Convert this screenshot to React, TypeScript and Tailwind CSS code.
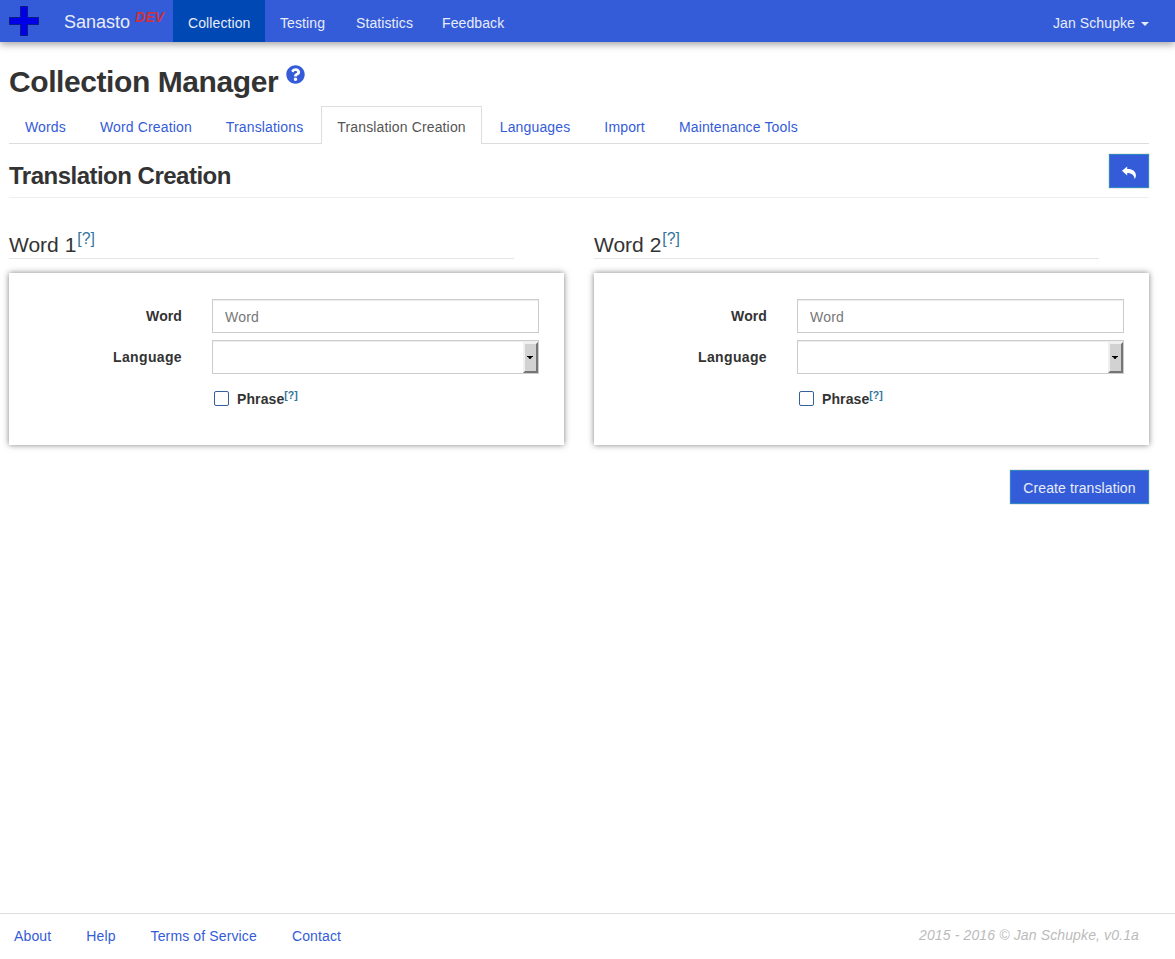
import { FaQuestionCircle } from "react-icons/fa";

const navItems = [
  { label: "Collection", width: "w-[92px]" },
  { label: "Testing", width: "w-[76px]" },
  { label: "Statistics", width: "w-[86px]" },
  { label: "Feedback", width: "w-[94px]" },
];
const tabs = [
  "Words",
  "Word Creation",
  "Translations",
  "Translation Creation",
  "Languages",
  "Import",
  "Maintenance Tools",
];
const footerLinks = ["About", "Help", "Terms of Service", "Contact"];

function Header() {
  return (
    <header className="flex h-[42px] items-start bg-[#345cd8] text-[#e8ecf8] shadow-[0_2px_8px_rgba(0,0,0,0.4)]">
      <svg className="mt-1.5 ml-[9px] h-[30px] w-[30px]" viewBox="0 0 30 30">
        <path
          d="M11.5.5h7v11h11v7h-11v11h-7v-11H.5v-7h11z"
          fill="#0000e6"
          stroke="#0a1a86"
        />
      </svg>
      <a href="#" className="ml-[25px] flex w-[109px] text-lg leading-[45px]">
        Sanasto
        <span className="ml-[5px] text-sm leading-[34px] font-bold text-[#cf3140] italic">DEV</span>
      </a>
      <nav className="flex flex-1 tracking-[0.1px]">
        {navItems.map(({ label, width }, i) => (
          <a
            key={label}
            href="#"
            className={`h-[42px] pl-[15px] leading-[46px] ${width} ${i === 0 ? "bg-[#0048b4]" : ""}`}
          >
            {label}
          </a>
        ))}
      </nav>
      <a href="#" className="mr-[26px] flex items-center leading-[46px] tracking-[0.1px]">
        Jan Schupke
        <svg className="mt-0.5 ml-1.5 h-1 w-2" viewBox="0 0 8 4">
          <path d="M0 0h8L4 4z" fill="currentColor" />
        </svg>
      </a>
    </header>
  );
}

function WordForm({ title }: { title: string }) {
  return (
    <section className="w-[555px]">
      <h3 className="mr-[50px] flex h-[31px] border-b border-[#e5e5e5] text-[21px] leading-[34px]">
        {title}
        <a href="#" className="ml-px text-[15.75px] leading-[22px] text-[#31749e]">[?]</a>
      </h3>
      <div className="mt-3.5 h-[172px] pt-[26px] pr-[25px] shadow-[0_0_6px_rgba(0,0,0,0.5)]">
        <div className="flex h-[41px]">
          <label className="w-[173px] text-right leading-[34px] font-bold tracking-[0.1px]">Word</label>
          <input
            placeholder="Word"
            className="ml-[30px] h-[34px] w-[327px] border border-[#ccc] px-3 pt-0.5 tracking-[0.2px] shadow-[inset_0_1px_1px_rgba(0,0,0,0.075)] placeholder:text-[#777]"
          />
        </div>
        <div className="flex h-[41px]">
          <label className="w-[173px] text-right leading-[34px] font-bold tracking-[0.35px]">Language</label>
          <div className="ml-[30px] flex h-[34px] w-[327px] justify-end border border-[#ccc] pt-px shadow-[inset_0_1px_1px_rgba(0,0,0,0.075)]">
            <button className="flex h-[31px] w-[15px] items-center justify-center border-2 border-t-[#f0f0f0] border-r-[#757575] border-b-[#757575] border-l-[#f0f0f0] bg-[#d2d2d2]">
              <svg className="mr-px mb-px h-[3px] w-1.5 shrink-0" viewBox="0 0 6 3">
                <path d="M0 0h6v1H5L3.5 3h-1L1 1H0z" />
              </svg>
            </button>
          </div>
        </div>
        <div className="ml-[205px] flex h-9 font-bold">
          <input
            type="checkbox"
            className="mt-[10px] h-[15px] w-[15px] appearance-none rounded-[2px] border border-[#34619e] bg-white"
          />
          <label className="ml-2 leading-[36px] tracking-[0.1px]">Phrase</label>
          <a href="#" className="text-[10.5px] leading-[28px] text-[#31749e]">[?]</a>
        </div>
      </div>
    </section>
  );
}

export default function App() {
  return (
    <div className="flex h-[959px] flex-col bg-white font-['Liberation_Sans',Arial,sans-serif] text-sm text-[#333]">
      <Header />
      <main className="flex-1 pr-[26px] pl-[9px]">
        <h1 className="flex h-16 text-[30px] leading-[79px] font-bold tracking-[-0.42px]">
          Collection Manager
          <FaQuestionCircle className="mt-[23px] ml-2 h-[19px] w-[19px] text-[#345cd8]" />
        </h1>
        <div className="flex h-[38px] border-b border-[#ddd] tracking-[0.145px]">
          {tabs.map((tab) => (
            <a
              key={tab}
              href="#"
              className={
                tab === "Translation Creation"
                  ? "mr-0.5 h-[38px] border border-b-0 border-[#ddd] bg-white px-[15px] leading-[40px] text-[#555]"
                  : "mr-0.5 h-[37px] border border-transparent px-[15px] leading-[40px] text-[#345cd8]"
              }
            >
              {tab}
            </a>
          ))}
        </div>
        <div className="flex h-[54px] justify-between border-b border-[#eee]">
          <h2 className="text-2xl leading-[64px] font-bold tracking-[-0.51px]">Translation Creation</h2>
          <button className="mt-2.5 flex h-[34px] w-10 items-center justify-center border border-[#2e8ac4] bg-[#345cd8] shadow-[0_0_1px_rgba(0,0,0,0.5)]">
            <svg className="mt-1 h-3.5 w-3.5" viewBox="0 0 14 14">
              <path d="M0 4.8 5.2.6V3C10.5 2.8 13.9 5.4 13.9 9.2c0 1.4-.4 2.6-1.3 3.8C12.3 9.2 9.8 7 5.2 7v2.4z" fill="white" />
            </svg>
          </button>
        </div>
        <div className="mt-[30px] flex justify-between">
          <WordForm title="Word 1" />
          <WordForm title="Word 2" />
        </div>
        <div className="mt-[25px] flex justify-end">
          <button className="h-[34px] w-[139px] border border-[#2e8ac4] bg-[#345cd8] pt-0.5 tracking-[0.1px] text-[#e8ecf8] shadow-[0_0_1px_rgba(0,0,0,0.5)]">
            Create translation
          </button>
        </div>
      </main>
      <footer className="flex h-[46px] justify-between border-t border-[#ddd] pr-9 pl-3.5 leading-[45px] tracking-[0.13px]">
        <nav className="flex gap-[35px] text-[#345cd8]">
          {footerLinks.map((link) => (
            <a key={link} href="#">{link}</a>
          ))}
        </nav>
        <span className="leading-[43px] text-[#bbb] italic">2015 - 2016 © Jan Schupke, v0.1a</span>
      </footer>
    </div>
  );
}
